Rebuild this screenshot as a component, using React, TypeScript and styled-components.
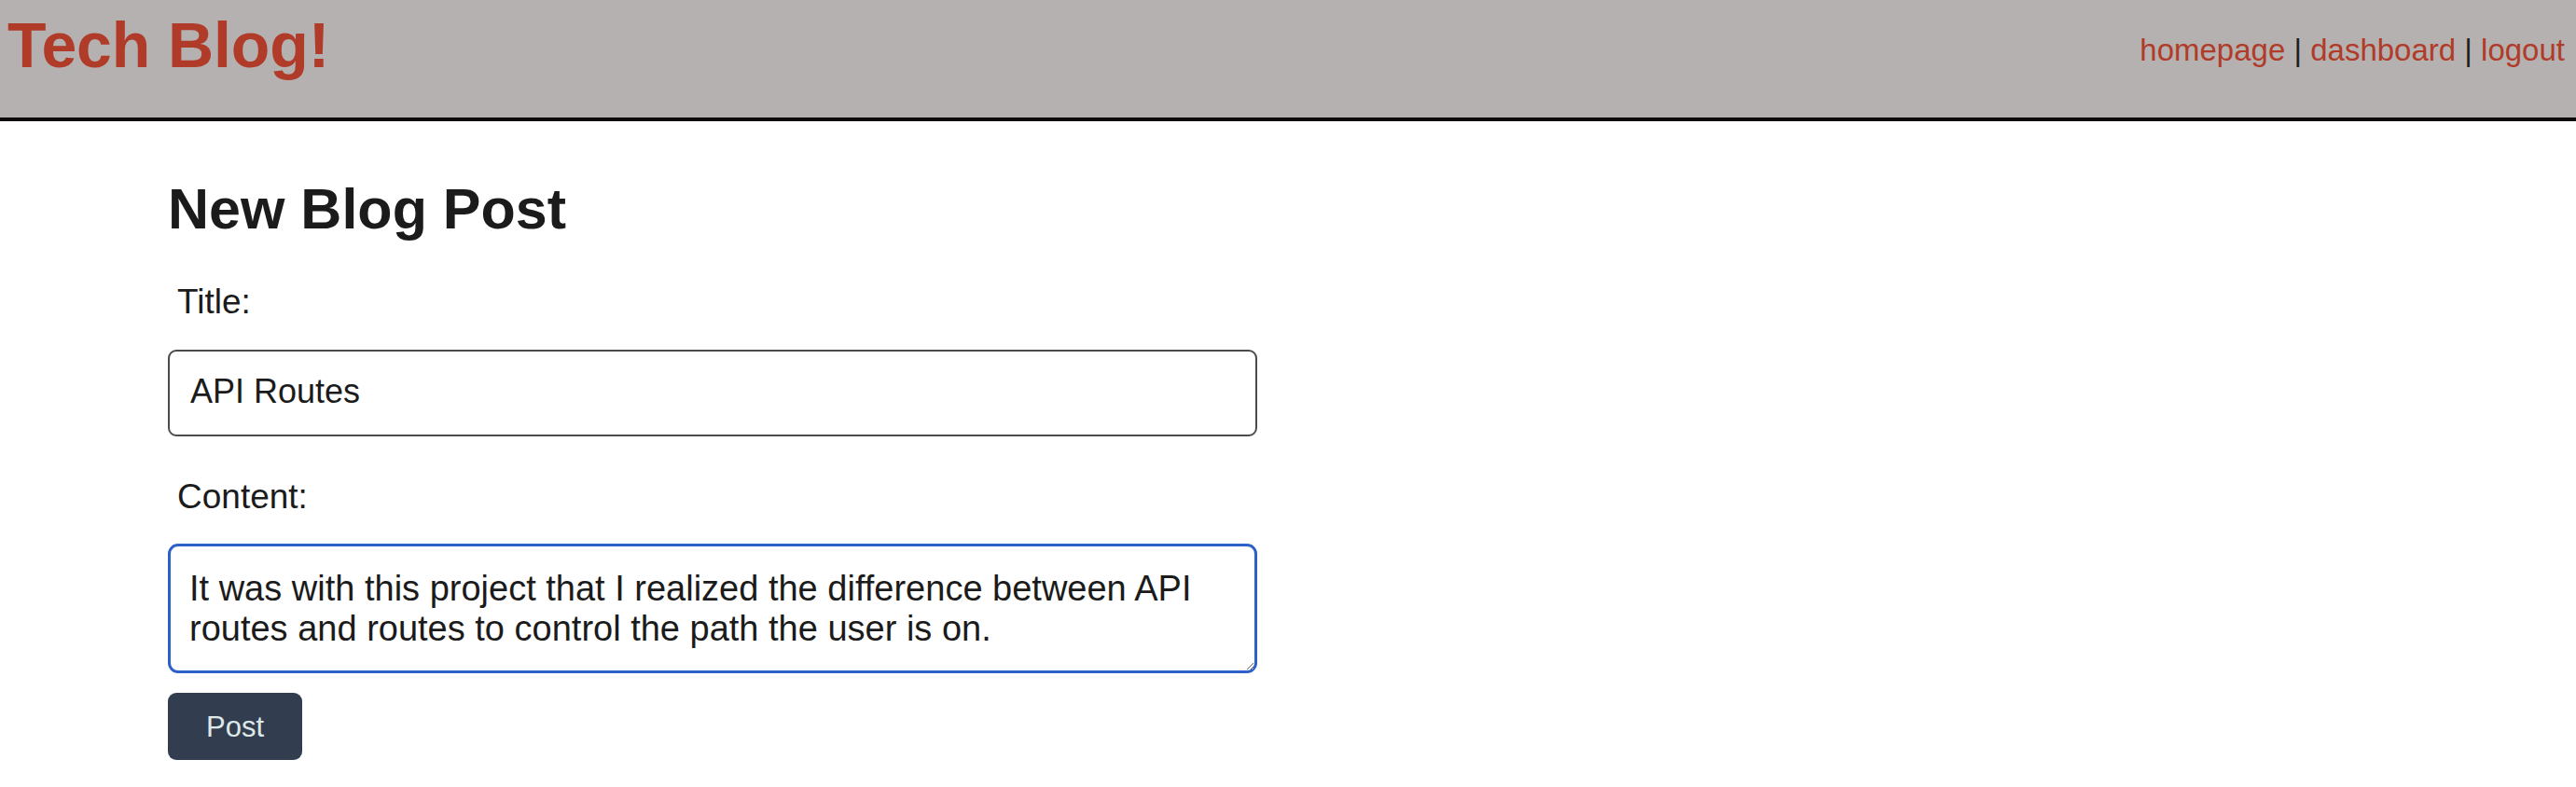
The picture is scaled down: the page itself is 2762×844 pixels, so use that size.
import React, { useEffect, useRef, useState } from "react";
import styled, { createGlobalStyle } from "styled-components";

const GlobalStyle = createGlobalStyle`
  html, body {
    margin: 0;
    padding: 0;
    background: #ffffff;
    font-family: "Liberation Sans", Arial, sans-serif;
    color: #1b1b1b;
  }
  * { box-sizing: border-box; }
`;

const Header = styled.header`
  height: 130px;
  background: #b5b1b0;
  border-bottom: 4px solid #0d0a09;
  display: flex;
  justify-content: space-between;
  align-items: flex-start;
  padding: 0 12px 0 8px;
`;

const Brand = styled.h1`
  margin: 14px 0 0 0;
  font-size: 68px;
  line-height: 68px;
  font-weight: 700;
  color: #b13b29;
  letter-spacing: -0.1px;
`;

const Nav = styled.nav`
  margin-top: 37px;
  font-size: 33px;
  line-height: 33px;
  color: #1e1e1e;
  white-space: pre;
`;

const NavLink = styled.a`
  color: #b13b29;
  text-decoration: none;
`;

const Main = styled.main`
  padding: 0 0 0 180px;
`;

const Form = styled.form`
  width: 1168px;
  display: flex;
  flex-direction: column;
  align-items: flex-start;
`;

const Heading = styled.h2`
  margin: 64px 0 0 0;
  font-size: 61px;
  line-height: 61px;
  font-weight: 700;
  color: #1b1b1b;
`;

const Label = styled.label<{ $gapTop: number }>`
  display: block;
  margin-top: ${(p) => p.$gapTop}px;
  padding-left: 10px;
  font-size: 37px;
  line-height: 37px;
  color: #1b1b1b;
`;

const TitleInput = styled.input`
  margin-top: 33px;
  width: 100%;
  height: 93px;
  padding: 25px 21px 28px 22px;
  border: 2px solid #4b4b4b;
  border-radius: 9px;
  font-family: "Liberation Sans", Arial, sans-serif;
  font-size: 36px;
  line-height: 36px;
  color: #1b1b1b;
  background: #ffffff;
  outline: none;
`;

const ContentArea = styled.textarea<{ $focused: boolean }>`
  margin-top: 32px;
  width: 100%;
  height: 139px;
  padding: 24px 21px 20px 20px;
  border: 3px solid ${(p) => (p.$focused ? "#2c61c9" : "#4b4b4b")};
  border-radius: 11px;
  font-family: "Liberation Sans", Arial, sans-serif;
  font-size: 38px;
  line-height: 43.3px;
  color: #1b1b1b;
  background: #ffffff;
  outline: none;
  resize: both;
  overflow: hidden;
  caret-color: #1b1b1b;
`;

const SubmitButton = styled.button`
  margin-top: 21px;
  width: 144px;
  height: 72px;
  border: none;
  border-radius: 9px;
  background: #323e4f;
  color: #dfe8e8;
  font-family: "Liberation Sans", Arial, sans-serif;
  font-size: 31px;
  line-height: 31px;
  padding: 0;
  cursor: pointer;
`;

const CONTENT =
  "It was with this project that I realized the difference between API routes and routes to control the path the user is on. ";

export default function App() {
  const areaRef = useRef<HTMLTextAreaElement>(null);
  const [title, setTitle] = useState("API Routes");
  const [content, setContent] = useState(CONTENT);

  useEffect(() => {
    const el = areaRef.current;
    if (el) {
      el.focus();
      el.setSelectionRange(el.value.length, el.value.length);
    }
  }, []);

  return (
    <>
      <GlobalStyle />
      <Header>
        <Brand>Tech Blog!</Brand>
        <Nav>
          <NavLink href="#">homepage</NavLink>
          {" | "}
          <NavLink href="#">dashboard</NavLink>
          {" | "}
          <NavLink href="#">logout</NavLink>
        </Nav>
      </Header>
      <Main>
        <Form onSubmit={(e) => e.preventDefault()}>
          <Heading>New Blog Post</Heading>
          <Label $gapTop={50} htmlFor="title">
            Title:
          </Label>
          <TitleInput id="title" value={title} onChange={(e) => setTitle(e.target.value)} />
          <Label $gapTop={46} htmlFor="content">
            Content:
          </Label>
          <ContentArea
            id="content"
            ref={areaRef}
            $focused={true}
            value={content}
            onChange={(e) => setContent(e.target.value)}
          />
          <SubmitButton type="submit">Post</SubmitButton>
        </Form>
      </Main>
    </>
  );
}
